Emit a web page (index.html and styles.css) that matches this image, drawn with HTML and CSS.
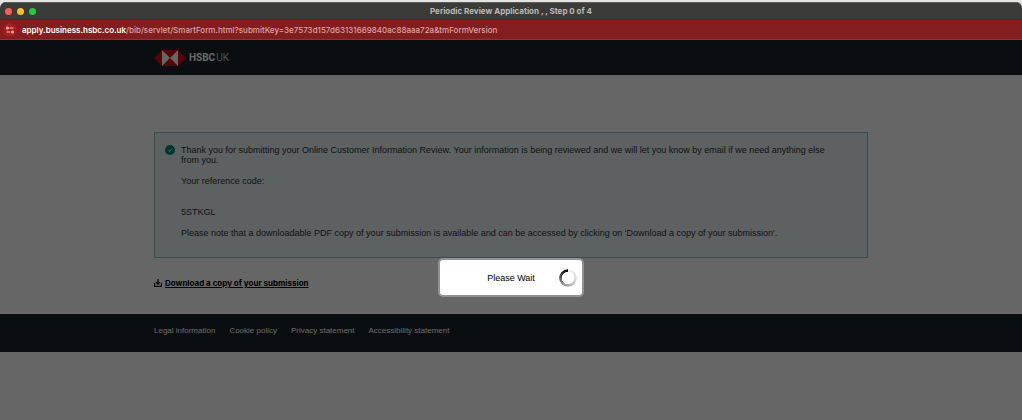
FILE: index.html
```html
<!DOCTYPE html>
<html lang="en">

<head>
    <meta charset="UTF-8">
    <meta name="viewport" content="width=device-width, initial-scale=1.0">
    <title>Periodic Review Application , , Step 0 of 4</title>
    <link rel="stylesheet" href="styles.css">
</head>

<body>

    <div class="window">
        <div class="titlebar">
            <div class="lights">
                <span class="light close"></span>
                <span class="light minimise"></span>
                <span class="light zoom"></span>
            </div>
            <div class="title">Periodic Review Application , , Step 0 of 4</div>
        </div>

        <div class="address">
            <button class="site-info" aria-label="View site information">
                <svg viewBox="0 0 14 14" fill="none" stroke="#f0c0c0" stroke-width="1.2">
                    <path d="M6.6 5h3.8M3.6 9h3.8" />
                    <circle cx="4.5" cy="5" r="0.9" />
                    <circle cx="9.5" cy="9" r="0.9" />
                </svg>
            </button>
            <div class="url"><span class="host">apply.business.hsbc.co.uk</span>/bib/servlet/SmartForm.html?submitKey=3e7573d157d63131669840ac88aaa72a&amp;tmFormVersion</div>
        </div>

        <div class="page">
            <header class="header">
                <div class="container brand">
                    <svg class="logo" viewBox="0 0 32 16">
                        <path fill="#db0011" d="M0 8l8-8h16l8 8-8 8H8z" />
                        <path fill="#fff" d="M8 0l8 8-8 8zM24 0l-8 8 8 8z" />
                    </svg>
                    <div class="brand-name"><b>HSBC</b><span>UK</span></div>
                </div>
            </header>

            <main class="container main">
                <div class="notice">
                    <svg class="tick" viewBox="0 0 10 10">
                        <circle cx="5" cy="5" r="5" fill="#00847f" />
                        <path d="M3 5.1l1.5 1.4L7.1 3.7" fill="none" stroke="#fff" stroke-width="0.8" />
                    </svg>
                    <div class="notice-text">
                        <p>Thank you for submitting your Online Customer Information Review. Your information is being reviewed and we will let you know by email if we need anything else from you.</p>
                        <p>Your reference code:</p>
                        <p class="code">5STKGL</p>
                        <p>Please note that a downloadable PDF copy of your submission is available and can be accessed by clicking on 'Download a copy of your submission'.</p>
                    </div>
                </div>

                <a class="download" href="#">
                    <svg viewBox="0 0 8 8" fill="none" stroke="#000" stroke-width="1.2">
                        <path d="M0.6 4v3.4h6.8V4M4 0v5M2 3.2l2 2 2-2" />
                    </svg>
                    <span>Download a copy of your submission</span>
                </a>
            </main>

            <footer class="footer">
                <nav class="container links">
                    <a href="#">Legal information</a>
                    <a href="#">Cookie policy</a>
                    <a href="#">Privacy statement</a>
                    <a href="#">Accessibility statement</a>
                </nav>
            </footer>

            <div class="overlay"></div>
        </div>
    </div>

    <div class="dialog" role="alertdialog" aria-label="Please Wait">
        <span>Please Wait</span>
        <div class="spinner"></div>
    </div>

</body>

</html>
```

FILE: styles.css
```css
* {
    box-sizing: border-box;
}

body {
    margin: 0;
    padding-top: 2px;
    background-color: #e4e4e0;
    font-family: "Liberation Sans", Arial, sans-serif;
    font-size: 9px;
    color: #333;
}

a {
    color: inherit;
    text-decoration: none;
}

.window {
    display: flex;
    flex-direction: column;
    min-height: calc(100vh - 2px);
    border-radius: 6px 6px 0 0;
    overflow: hidden;
}

/* browser chrome */
.titlebar {
    display: grid;
    grid-template-columns: 1fr auto 1fr;
    align-items: center;
    height: 17px;
    padding: 0 5px;
    background-color: #3b3c39;
    border-top: 1px solid #5d5e5b;
}

.lights {
    display: flex;
    gap: 5px;
}

.light {
    width: 7px;
    height: 7px;
    border-radius: 50%;
}

.close {
    background-color: #ff5f57;
}

.minimise {
    background-color: #febc2e;
}

.zoom {
    background-color: #28c840;
}

.title {
    font-family: Inter, sans-serif;
    font-size: 8px;
    font-weight: 700;
    color: #b9bab8;
}

.address {
    display: flex;
    align-items: center;
    gap: 5px;
    height: 21px;
    padding: 0 3px;
    background-color: #831e1f;
    border-top: 1px solid #6b1a1a;
    border-bottom: 1px solid #923433;
}

.site-info {
    width: 14px;
    height: 14px;
    padding: 0;
    border: none;
    border-radius: 50%;
    background-color: #ab1b1c;
}

.site-info svg {
    display: block;
}

.url {
    font-family: Inter, sans-serif;
    font-size: 8px;
    font-weight: 500;
    line-height: 10px;
    color: #d9a5a5;
}

.host {
    font-weight: 600;
    color: #fff;
}

/* page */
.page {
    position: relative;
    flex: 1;
    background-color: #fff;
}

.container {
    width: 70%;
    max-width: 714px;
    margin: 0 auto;
}

.header {
    background-color: #1b252a;
}

.brand {
    display: flex;
    align-items: center;
    gap: 3px;
    height: 35px;
}

.logo {
    width: 32px;
    height: 16px;
}

.brand-name {
    display: flex;
    gap: 1px;
    font-family: Roboto, sans-serif;
    font-size: 10px;
    font-weight: 300;
    color: #fff;
}

.brand-name b {
    font-weight: 700;
}

.main {
    padding: 57px 0 25px;
}

.notice {
    display: flex;
    gap: 6px;
    padding: 12px 25px 19px 10px;
    background-color: #e5f2f2;
    border: 1px solid #80c8c4;
}

.tick {
    flex: none;
    width: 10px;
    height: 10px;
}

.notice-text p {
    margin: 0 0 11px;
    line-height: 10px;
}

.notice-text p:last-child {
    margin-bottom: 0;
}

.notice-text .code {
    margin-top: 21px;
}

.download {
    display: inline-flex;
    align-items: center;
    gap: 3px;
    margin-top: 20px;
    font-family: Inter, sans-serif;
    font-size: 8px;
    line-height: 10px;
    font-weight: 700;
    color: #000;
}

.download svg {
    width: 8px;
    height: 8px;
}

.download span {
    text-decoration: underline;
}

.footer {
    background-color: #1b252a;
}

.links {
    display: flex;
    gap: 14px;
    height: 38px;
    padding-top: 12px;
    font-size: 8px;
    line-height: 10px;
    color: #fff;
}

.overlay {
    position: absolute;
    inset: 0;
    background-color: rgba(0, 0, 0, 0.6);
}

/* loading dialog */
.dialog {
    position: fixed;
    top: 258px;
    left: 50%;
    display: flex;
    align-items: center;
    justify-content: center;
    width: 146px;
    height: 39px;
    transform: translateX(-50%);
    background-color: #fff;
    border: 2px solid #929292;
    border-radius: 5px;
    color: #000;
}

.spinner {
    position: absolute;
    right: 5px;
    width: 18px;
    height: 18px;
    border-radius: 50%;
    background: conic-gradient(#f4f4f4, #ddd 25%, #999 60%, #222 90%, #000);
    mask: radial-gradient(closest-side, transparent 66%, #000 72%);
}
```
